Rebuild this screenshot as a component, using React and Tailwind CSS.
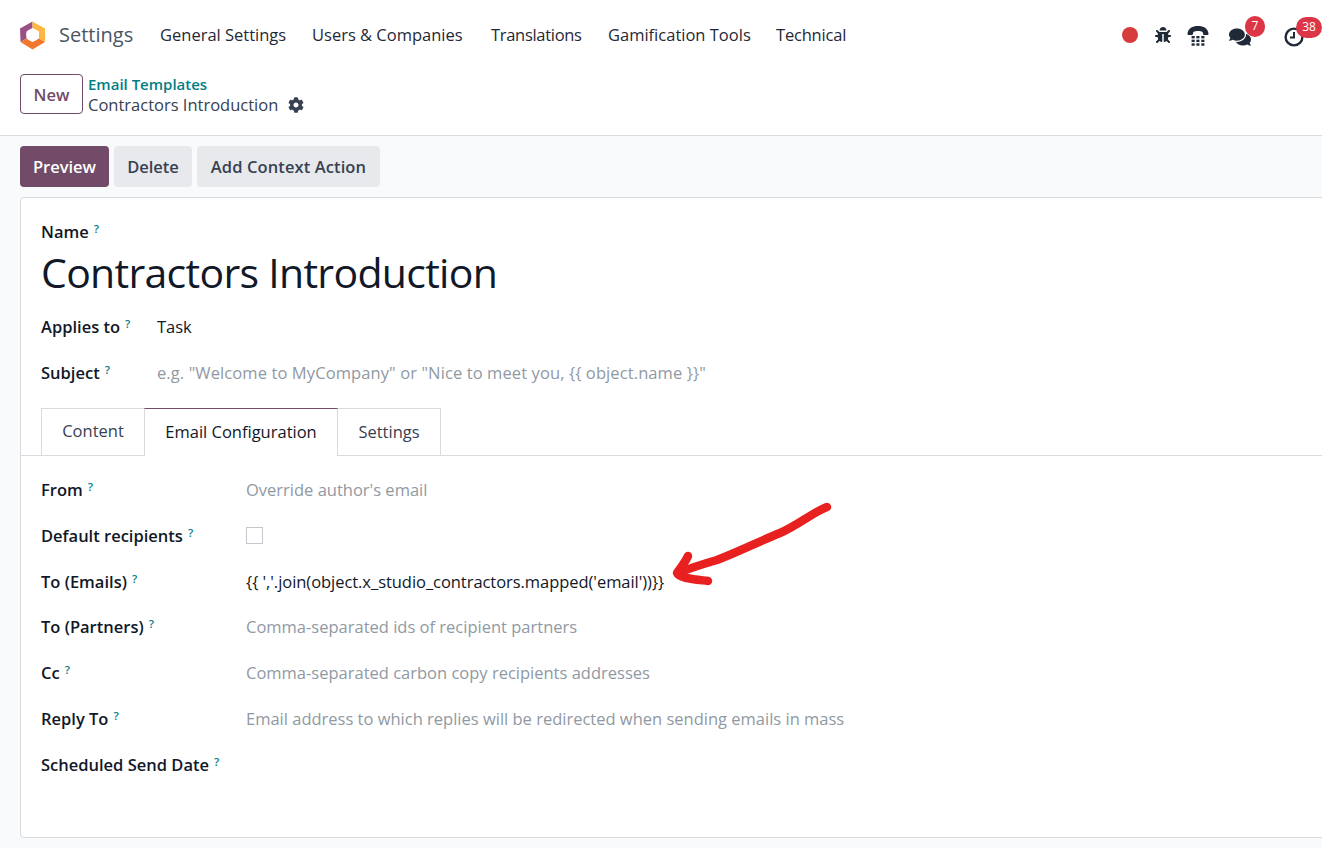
import { FaBug, FaCog, FaComments } from 'react-icons/fa'

const font = { fontFamily: '"Open Sans", "Noto Sans", sans-serif' }

const menu = [
  ['General Settings', 'w-[152px]', ''],
  ['Users & Companies', 'w-[179px]', ''],
  ['Translations', 'w-[117px]', 'tracking-[-0.3px]'],
  ['Gamification Tools', 'w-[168px]', ''],
  ['Technical', 'w-[90px]', 'tracking-[-0.2px]'],
]

const configRows = [
  { label: 'From', placeholder: "Override author's email" },
  { label: 'Default recipients', checkbox: true },
  { label: 'To (Emails)', value: "{{ ','.join(object.x_studio_contractors.mapped('email'))}}" },
  { label: 'To (Partners)', placeholder: 'Comma-separated ids of recipient partners' },
  { label: 'Cc', placeholder: 'Comma-separated carbon copy recipients addresses' },
  { label: 'Reply To', placeholder: 'Email address to which replies will be redirected when sending emails in mass' },
  { label: 'Scheduled Send Date' },
]

function Help() {
  return <sup className="ml-[5px] relative -top-[5px] text-[11.5px] font-semibold text-[#017e84]">?</sup>
}

function Label({ children }) {
  return (
    <span className="text-[16.5px] font-semibold text-[#111827] whitespace-nowrap">
      {children}
      <Help />
    </span>
  )
}

function Logo() {
  return (
    <svg width="27" height="29" viewBox="0 0 27 29">
      <path d="M13.5 0.5 L13.5 7 L7.5 10.5 L7.5 17.5 L1.5 21 L1 7.5 Z" fill="#985184" />
      <path d="M13.5 0.5 L26 7.5 L26 21 L20 17.5 L20 10.5 L13.5 7 Z" fill="#ffb643" />
      <path d="M1.5 21 L7.5 17.5 L13.5 21 L20 17.5 L26 21 L13.5 28.5 Z" fill="#f2762e" />
      <circle cx="13.5" cy="14" r="6.2" fill="#fff" />
    </svg>
  )
}

function Phone() {
  return (
    <svg width="24" height="22" viewBox="0 0 24 24" fill="#1f2937">
      <path d="M0.5 9.5 C1 3.5 6 1 12 1 C18 1 23 3.5 23.5 9.5 L23 11 L18 11 L17 7.5 C14.5 6.4 9.5 6.4 7 7.5 L6 11 L1 11 Z" />
      <rect x="5" y="12" width="3.4" height="2.6" />
      <rect x="10.2" y="12" width="3.4" height="2.6" />
      <rect x="15.6" y="12" width="3.4" height="2.6" />
      <rect x="5" y="16" width="3.4" height="2.6" />
      <rect x="10.2" y="16" width="3.4" height="2.6" />
      <rect x="15.6" y="16" width="3.4" height="2.6" />
      <rect x="5" y="20" width="3.4" height="2.6" />
      <rect x="10.2" y="20" width="3.4" height="2.6" />
      <rect x="15.6" y="20" width="3.4" height="2.6" />
    </svg>
  )
}

function Clock() {
  return (
    <svg width="20" height="20" viewBox="0 0 20 20" fill="none" stroke="#1f2937" strokeWidth="2.4">
      <circle cx="10" cy="10" r="8.4" />
      <path d="M10 5 V10.5 H6" strokeWidth="2" />
    </svg>
  )
}

export default function App() {
  return (
    <div style={font} className="relative h-[848px] w-[1322px] overflow-hidden bg-[#f9fafb] text-[#374151]">
      <div className="bg-white">
        <nav className="flex h-[70px] items-center">
          <div className="ml-[19px] flex w-[27px] shrink-0">
            <Logo />
          </div>
          <span className="ml-[13px] w-[101px] text-[20px] text-[#4b5563]">Settings</span>
          {menu.map(([name, width, tracking]) => (
            <span key={name} className={`${width} ${tracking} shrink-0 text-[16.5px] whitespace-nowrap text-[#1f2937]`}>
              {name}
            </span>
          ))}
          <div className="ml-[256px] flex items-center">
            <span className="h-4 w-4 rounded-full bg-[#d63c3c]" />
            <FaBug className="ml-[17px] h-[16px] w-[16px] text-[#1f2937]" />
            <div className="ml-[15px] mt-[1px]">
              <Phone />
            </div>
            <div className="relative ml-[19px] mt-[3px]">
              <FaComments className="h-[22px] w-[22px] text-[#1f2937]" />
              <span className="absolute -right-[14px] -top-[10px] flex h-[21px] w-[20px] items-center justify-center rounded-full bg-[#dc3545] text-[12px] text-white">
                7
              </span>
            </div>
            <div className="relative ml-[33px] mt-[3px]">
              <Clock />
              <span className="absolute -right-[18px] -top-[10px] flex h-[21px] w-[26px] items-center justify-center rounded-full bg-[#dc3545] text-[12px] text-white">
                38
              </span>
            </div>
          </div>
        </nav>

        <div className="flex h-[66px] items-start border-b border-[#d8dadd] pl-[20px] pt-[4px]">
          <button className="h-[40px] w-[63px] rounded-[4px] border border-[#714b67] bg-white pt-[2px] text-[16.5px] font-semibold text-[#714b67]">
            New
          </button>
          <div className="ml-[5px] flex flex-col">
            <span className="h-[20px] text-[15px] leading-[20px] font-semibold text-[#017e84]">Email Templates</span>
            <div className="flex h-[22px] items-center">
              <span className="text-[16.5px] text-[#374151]">Contractors Introduction</span>
              <FaCog className="ml-[10px] h-4 w-4 text-[#374151]" />
            </div>
          </div>
        </div>
      </div>

      <div className="flex gap-[5px] pl-[20px] pt-[10px]">
        <button className="h-[41px] w-[89px] rounded-[4px] bg-[#714b67] pt-[1px] text-[16.5px] font-semibold text-white">Preview</button>
        <button className="h-[41px] w-[78px] rounded-[4px] bg-[#e7e9ed] pt-[1px] text-[16.5px] font-semibold text-[#374151]">Delete</button>
        <button className="h-[41px] w-[183px] rounded-[4px] bg-[#e7e9ed] pt-[1px] text-[16.5px] font-semibold tracking-[0.1px] text-[#374151]">Add Context Action</button>
      </div>

      <div className="ml-[20px] mt-[10px] h-[641px] w-[1320px] rounded-[4px] border border-[#d8dadd] bg-white">
        <div className="px-[20px] pt-[22px]">
          <Label>Name</Label>
          <h1 className="text-[41px] leading-[54px] tracking-[-0.7px] text-[#111827]">Contractors Introduction</h1>
          <div className="mt-[17px] flex h-[24px] items-center">
            <div className="w-[116px]">
              <Label>Applies to</Label>
            </div>
            <span className="text-[16.5px] text-[#111827]">Task</span>
          </div>
          <div className="mt-[22px] flex h-[24px] items-center">
            <div className="w-[116px]">
              <Label>Subject</Label>
            </div>
            <span className="text-[16.5px] tracking-[0.1px] text-[#9099a3]">e.g. "Welcome to MyCompany" or "Nice to meet you, {'{{'} object.name {'}}'}"</span>
          </div>
        </div>

        <div className="mt-[22px] flex h-[48px] border-b border-[#d8dadd] pl-[20px]">
          <div className="flex h-[47px] w-[103px] items-center justify-center border-t border-l border-[#d8dadd] text-[16.5px] text-[#374151]">Content</div>
          <div className="flex h-[48px] w-[194px] items-center justify-center border-x border-t border-[#d8dadd] border-t-[#714b67] bg-white pt-[1px] text-[16.5px] text-[#111827]">Email Configuration</div>
          <div className="flex h-[47px] w-[103px] items-center justify-center border-t border-r border-[#d8dadd] pt-[1px] text-[16.5px] text-[#374151]">Settings</div>
        </div>

        <div className="flex flex-col gap-[21.7px] px-[20px] pt-[23px]">
          {configRows.map((row) => (
            <div key={row.label} className="flex h-[24px] items-center">
              <div className="w-[205px] shrink-0">
                <Label>{row.label}</Label>
              </div>
              {row.placeholder && <span className="text-[16.5px] text-[#9099a3]">{row.placeholder}</span>}
              {row.value && <span className="text-[16.5px] tracking-[-0.05px] text-[#111827]">{row.value}</span>}
              {row.checkbox && <span className="-mt-[2px] h-[17px] w-[17px] border border-[#c4c8ce] bg-white" />}
            </div>
          ))}
        </div>
      </div>

      <svg className="absolute left-[670px] top-[500px]" width="165" height="90" viewBox="0 0 165 90" fill="none" stroke="#e8201f" strokeWidth="8.5" strokeLinecap="round" strokeLinejoin="round">
        <path d="M157 7 C145 11 127 26 110 33 C90 41 68 52 47 60 C33 64 18 69 8 73" />
        <path d="M18 56 C15 63 10 68 7 73 C9 78 22 79 38 81" />
      </svg>
    </div>
  )
}
